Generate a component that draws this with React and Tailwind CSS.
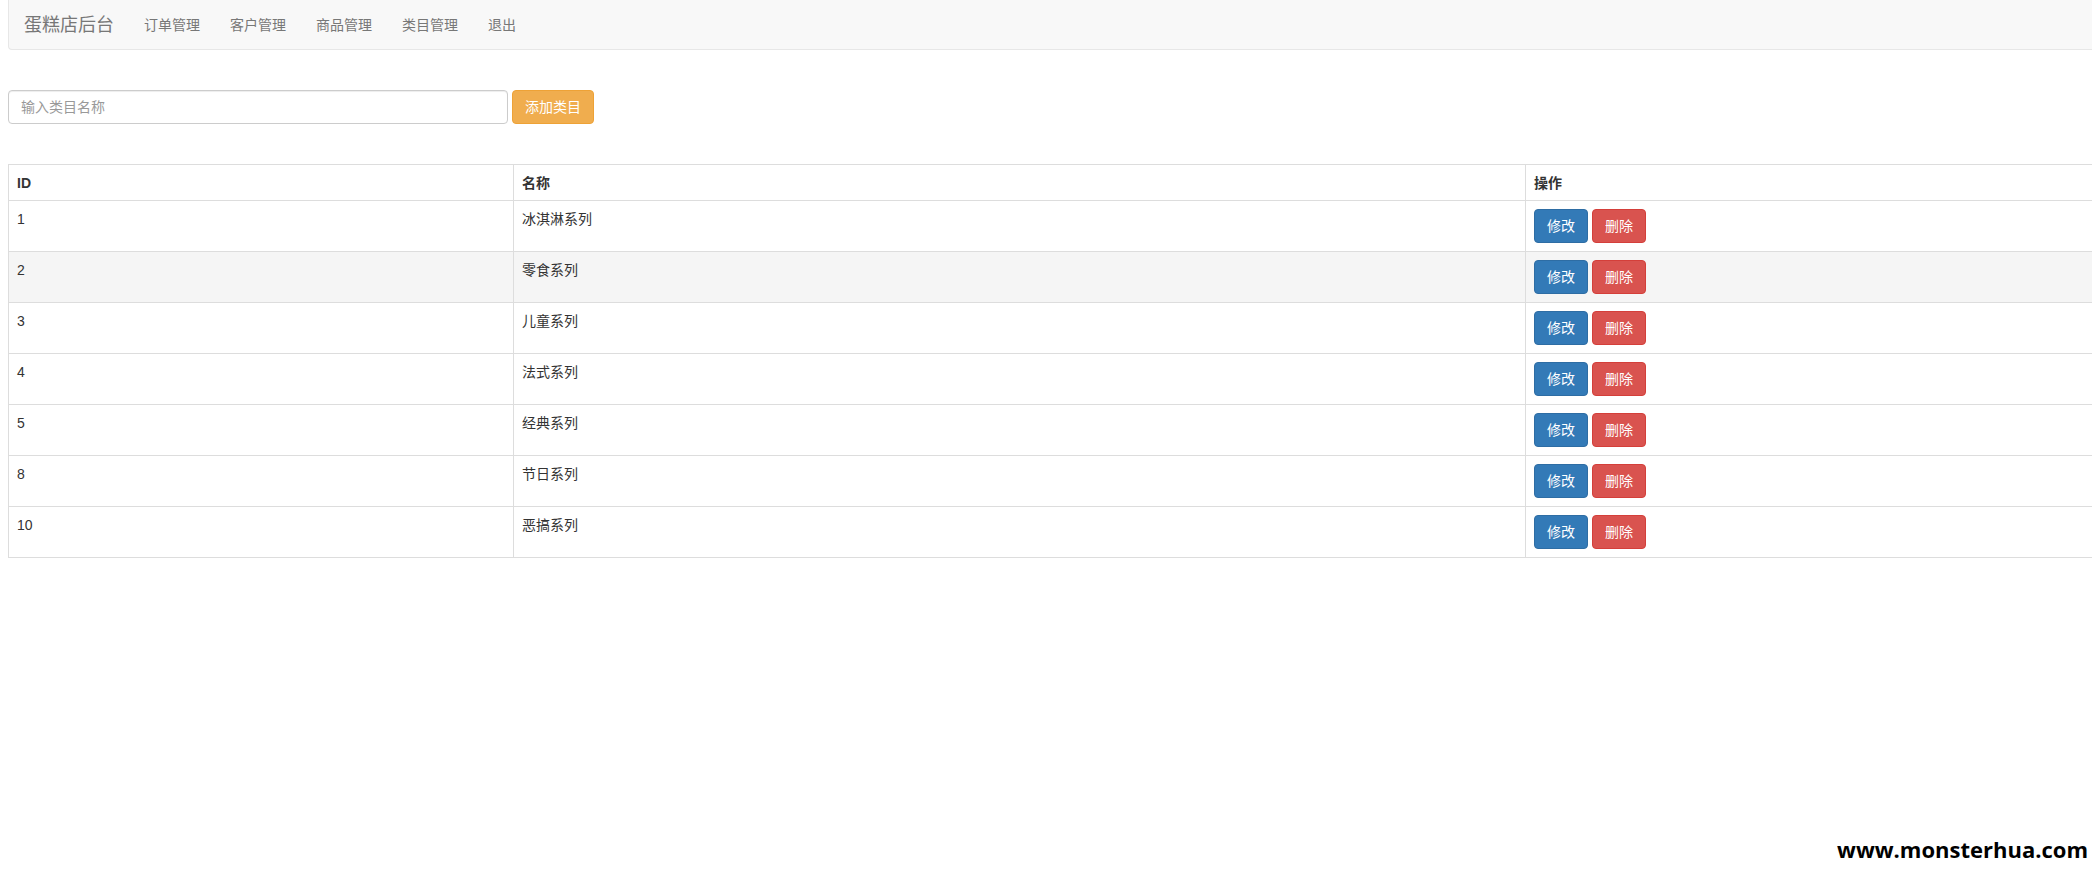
import React from "react";

const font = {
  fontFamily:
    '"Liberation Sans", Arial, "Noto Sans CJK SC", sans-serif',
};

const navItems = ["订单管理", "客户管理", "商品管理", "类目管理", "退出"];

const categories = [
  { id: 1, name: "冰淇淋系列" },
  { id: 2, name: "零食系列" },
  { id: 3, name: "儿童系列" },
  { id: 4, name: "法式系列" },
  { id: 5, name: "经典系列" },
  { id: 8, name: "节日系列" },
  { id: 10, name: "恶搞系列" },
];

const App = () => {
  return (
    <div
      className="relative w-full h-[882px] overflow-hidden bg-white text-[14px] leading-[20px] text-[#333]"
      style={font}
    >
      {/* navbar */}
      <div className="pl-2">
        <div className="w-[2120px] h-[50px] flex items-start bg-[#f8f8f8] border-l border-b border-[#e7e7e7] rounded-bl-[4px] box-border">
          <a className="block px-[15px] py-[15px] text-[18px] leading-[20px] text-[#777]">
            蛋糕店后台
          </a>
          <ul className="flex">
            {navItems.map((item) => (
              <li key={item}>
                <a className="block px-[15px] py-[15px] leading-[20px] text-[#777]">
                  {item}
                </a>
              </li>
            ))}
          </ul>
        </div>
      </div>

      {/* add form */}
      <div className="pl-2 mt-[40px] flex items-center gap-[4px]">
        <input
          type="text"
          placeholder="输入类目名称"
          className="w-[500px] h-[34px] px-[12px] py-[6px] border border-[#ccc] rounded-[4px] shadow-[inset_0_1px_1px_rgba(0,0,0,0.075)] text-[14px] placeholder:text-[#999] outline-none"
          style={font}
        />
        <button className="h-[34px] px-[12px] py-[6px] bg-[#f0ad4e] border border-[#eea236] rounded-[4px] text-white text-[14px] leading-[20px]">
          添加类目
        </button>
      </div>

      {/* table */}
      <div className="pl-2 mt-[40px]">
        <table className="w-[2120px] border-collapse border border-[#ddd] table-fixed">
          <colgroup>
            <col className="w-[505px]" />
            <col className="w-[1012px]" />
            <col />
          </colgroup>
          <thead>
            <tr>
              <th className="text-left font-bold px-[8px] pt-[8px] pb-[7px] border border-[#ddd] align-bottom">
                ID
              </th>
              <th className="text-left font-bold px-[8px] pt-[8px] pb-[7px] border border-[#ddd] align-bottom">
                名称
              </th>
              <th className="text-left font-bold px-[8px] pt-[8px] pb-[7px] border border-[#ddd] align-bottom">
                操作
              </th>
            </tr>
          </thead>
          <tbody>
            {categories.map((c, i) => (
              <tr key={c.id} className={i === 1 ? "bg-[#f5f5f5]" : ""}>
                <td className="p-[8px] border border-[#ddd] align-top">{c.id}</td>
                <td className="p-[8px] border border-[#ddd] align-top">{c.name}</td>
                <td className="p-[8px] border border-[#ddd] align-top">
                  <div className="flex gap-[4px]">
                    <button className="h-[34px] px-[12px] py-[6px] bg-[#337ab7] border border-[#2e6da4] rounded-[4px] text-white leading-[20px]">
                      修改
                    </button>
                    <button className="h-[34px] px-[12px] py-[6px] bg-[#d9534f] border border-[#d43f3a] rounded-[4px] text-white leading-[20px]">
                      删除
                    </button>
                  </div>
                </td>
              </tr>
            ))}
          </tbody>
        </table>
      </div>

      {/* watermark */}
      <div
        className="absolute right-[4px] bottom-[22px] text-[22px] leading-none font-bold text-black"
        style={{ fontFamily: '"Open Sans", "DejaVu Sans", sans-serif' }}
      >
        www.monsterhua.com
      </div>
    </div>
  );
};

export default App;
